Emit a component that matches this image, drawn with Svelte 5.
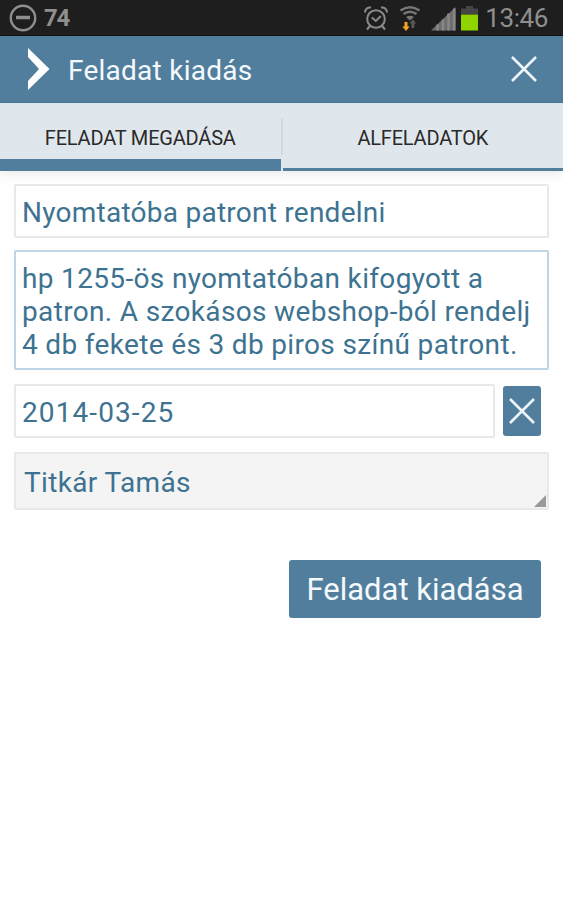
<script lang="ts">
    let tab = $state("task")
    let title = $state("Nyomtatóba patront rendelni")
    let description = $state("hp 1255-ös nyomtatóban kifogyott a\npatron. A szokásos webshop-ból rendelj\n4 db fekete és 3 db piros színű patront.")
    let dueDate = $state("2014-03-25")
    let assignee = $state("Titkár Tamás")
</script>

<div class="status">
    <svg class="dnd" viewBox="0 0 28 28">
        <circle cx="14" cy="14" r="12.2" />
        <path d="M7 13.5h14" />
    </svg>
    <span class="count">74</span>
    <svg class="icons" viewBox="0 0 120 36">
        <g fill="none" stroke="#8b8b8b" stroke-width="2">
            <circle cx="13" cy="19" r="8.8" />
            <path d="M8.8 17.5l4 3.5 5-5M2 12.500a5 5 0 0 1 6-5M24 12.500a5 5 0 0 0-6-5M7 26l-3 3.500M19 26l3 3.500" />
        </g>
        <g fill="none" stroke="#777" stroke-width="2.600">
            <path d="M37.500 10.500q9.500-6.500 19 0M40.500 14q6.500-4.500 13 0" />
        </g>
        <path fill="#777" d="M43 17q4-2.500 8 0l-4 3.500z" />
        <path fill="#f5a623" d="M41.500 22h3v4.500h2.200l-3.700 4.500-3.700-4.500h2.200z" />
        <path fill="#5a5a5a" d="M48.500 28v-4.500h-2l3.400-4 3.400 4h-2V28z" />
        <path fill="#6e6e6e" d="M68 30.500L92.500 7v23.500z" />
        <path stroke="#888" stroke-width="2.500" d="M74.500 30.500v-6M80 30.500v-11M85.500 30.500v-17M91.200 30.500V8.500" />
        <path fill="#454545" d="M103 6h7v2.500h5V14H98V8.500h5z" />
        <path fill="#8fd400" d="M98 14.500h17v16H98z" />
    </svg>
    <span class="clock">13:46</span>
</div>

<header>
    <svg class="chevron" viewBox="0 0 22 42">
        <path d="M0 0L21.500 21 0 42V33L11 21 0 9z" />
    </svg>
    <h1>Feladat kiadás</h1>
    <button class="close" type="button" aria-label="Bezárás">
        <svg class="cross" viewBox="0 0 26 26"><path d="M1 1l24 24M25 1L1 25" /></svg>
    </button>
</header>

<nav>
    <button class:active={tab === "task"} type="button" onclick={() => tab = "task"}>FELADAT MEGADÁSA</button>
    <i></i>
    <button class:active={tab === "sub"} type="button" onclick={() => tab = "sub"}>ALFELADATOK</button>
</nav>

<form>
    <input type="text" aria-label="Feladat" bind:value={title}>
    <textarea aria-label="Leírás" bind:value={description} spellcheck="false"></textarea>
    <div class="date">
        <input type="text" aria-label="Határidő" bind:value={dueDate}>
        <button type="button" aria-label="Törlés" onclick={() => dueDate = ""}>
            <svg class="cross" viewBox="0 0 26 26"><path d="M1 1l24 24M25 1L1 25" /></svg>
        </button>
    </div>
    <button class="spinner" type="button">
        <span>{assignee}</span>
        <svg viewBox="0 0 12 12"><path d="M12 0v12H0z" /></svg>
    </button>
    <button class="submit" type="button">Feladat kiadása</button>
</form>

<style>
    :global(body) {
        background: #fefefe;
        font-family: Roboto, sans-serif;
    }

    button, input, textarea {
        font-family: inherit;
        margin: 0;
        padding: 0;
        border: 0;
        outline: none;
        box-sizing: border-box;
    }

    .status {
        display: flex;
        align-items: center;
        height: 36px;
        box-sizing: border-box;
        padding: 0 15px 0 9px;
        background: #1e1e1e;
        border-bottom: 1px solid #160d10;
        color: #8f8f8f;
    }

    .dnd {
        width: 28px;
        height: 28px;
        fill: none;
        stroke: #8f8f8f;
        stroke-width: 2.4;

        & path {
            stroke-width: 3.5;
        }
    }

    .count {
        margin-left: 7px;
        font-size: 24px;
        font-weight: 700;
        letter-spacing: -1.2px;
    }

    .icons {
        width: 120px;
        height: 36px;
        margin-left: auto;
    }

    .clock {
        width: 65px;
        font-size: 26px;
        letter-spacing: -0.4px;
        text-align: right;
    }

    header {
        display: flex;
        align-items: center;
        height: 67px;
        box-sizing: border-box;
        padding: 0 26px 0 28px;
        background: #527e9d;
        border-bottom: 1px solid #477795;
    }

    .chevron {
        width: 22px;
        height: 42px;
        fill: #fff;
    }

    h1 {
        margin: 2px 0 0 18px;
        color: #f4f9fc;
        font-size: 28px;
        font-weight: 400;
        letter-spacing: 0.25px;
    }

    .close {
        display: flex;
        margin-left: auto;
        background: none;
    }

    .cross {
        width: 26px;
        height: 26px;
        fill: none;
        stroke: #edf5fa;
        stroke-width: 2.6;
    }

    nav {
        display: flex;
        height: 68px;
        background: #e0e7ec;
        box-shadow: 0 2px 9px rgba(90, 70, 60, .13);

        & button {
            flex: 1;
            padding-top: 4px;
            border-bottom: 3px solid #527e9d;
            background: none;
            color: #2a2a2a;
            font-size: 20px;
            letter-spacing: -0.2px;
        }

        & button.active {
            padding-top: 13px;
            border-bottom-width: 12px;
        }

        & i {
            width: 2px;
            height: 37px;
            margin-top: 15px;
            background: #d3dade;
        }
    }

    form {
        display: flex;
        flex-direction: column;
        padding: 13px 14px 0;
    }

    input, textarea, .spinner {
        border: 2px solid #e8e8e8;
        border-radius: 2px;
        background: #fff;
        color: #3d7391;
        font-size: 28px;
        letter-spacing: 0.25px;
    }

    input {
        height: 54px;
        padding: 2px 6px 0;
    }

    textarea {
        height: 120px;
        margin-top: 12px;
        padding: 10px 6px 0;
        border-color: #bdd5e6;
        line-height: 33px;
        letter-spacing: 0.34px;
        resize: none;
        overflow: hidden;
        white-space: pre;
    }

    .date {
        display: flex;
        align-items: center;
        margin-top: 14px;

        & input {
            flex: 1;
            min-width: 0;
            letter-spacing: 1.1px;
        }

        & button {
            display: flex;
            align-items: center;
            justify-content: center;
            width: 38px;
            height: 50px;
            margin: 0 8px;
            border-radius: 3px;
            background: #527e9d;
        }
    }

    .spinner {
        display: flex;
        align-items: center;
        justify-content: space-between;
        height: 58px;
        margin-top: 14px;
        padding: 3px 1px 1px 8px;
        background: #f4f4f4;
        letter-spacing: 0.35px;

        & svg {
            align-self: flex-end;
            width: 12px;
            height: 12px;
            fill: #999;
        }
    }

    .submit {
        align-self: flex-end;
        width: 252px;
        height: 58px;
        margin: 50px 8px 0 0;
        border-radius: 3px;
        background: #527e9d;
        color: #f4f9fc;
        font-size: 31px;
    }
</style>
